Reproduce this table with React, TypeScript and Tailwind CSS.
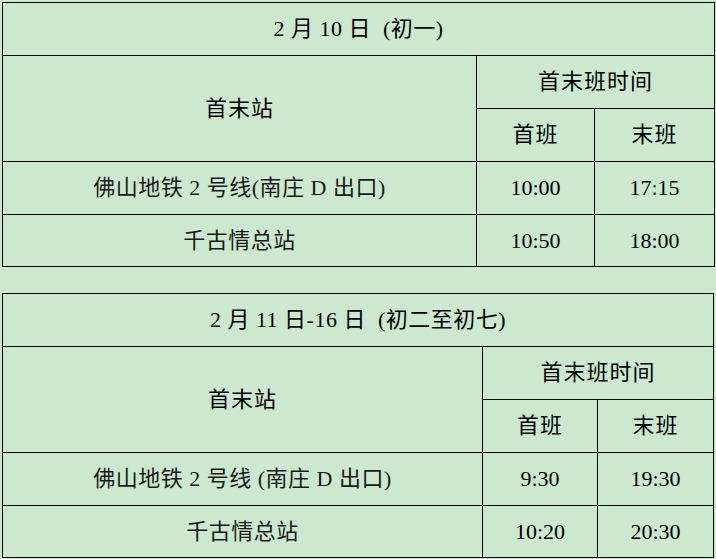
const font = "font-['Liberation_Serif','Noto_Sans_CJK_SC',serif]";

interface ScheduleRow {
  station: string;
  first: string;
  last: string;
}

interface ScheduleTableProps {
  title: string;
  rows: ScheduleRow[];
  colWidths: [string, string, string];
  tableWidth: string;
}

function ScheduleTable({ title, rows, colWidths, tableWidth }: ScheduleTableProps) {
  const cell = "border border-black text-center align-middle p-0";
  return (
    <table className={`${tableWidth} border-collapse border border-black table-fixed`}>
      <colgroup>
        <col className={colWidths[0]} />
        <col className={colWidths[1]} />
        <col className={colWidths[2]} />
      </colgroup>
      <tbody>
        <tr className="h-[53px]">
          <td colSpan={3} className={`${cell} whitespace-pre`}>
            {title}
          </td>
        </tr>
        <tr className="h-[53px]">
          <td rowSpan={2} className={`${cell} tracking-[1px]`}>
            首末站
          </td>
          <td colSpan={2} className={`${cell} tracking-[1px]`}>
            首末班时间
          </td>
        </tr>
        <tr className="h-[53px]">
          <td className={`${cell} tracking-[1px]`}>首班</td>
          <td className={`${cell} tracking-[1px]`}>末班</td>
        </tr>
        {rows.map((r, i) => (
          <tr key={r.station} className={i === rows.length - 1 ? "h-[52px]" : "h-[53px]"}>
            <td className={`${cell} text-[#1a1a1a]`}>{r.station}</td>
            <td className={`${cell} tracking-normal`}>{r.first}</td>
            <td className={`${cell} tracking-normal`}>{r.last}</td>
          </tr>
        ))}
      </tbody>
    </table>
  );
}

export default function App() {
  return (
    <div className={`min-h-screen w-[716px] bg-[#cce8cf] pl-[2px] pt-[2px] text-[22px] leading-none text-black tracking-[0.5px] ${font}`}>
      <ScheduleTable
        title="2 月 10 日  (初一)"
        tableWidth="w-[712px]"
        colWidths={["w-[474px]", "w-[118px]", "w-[120px]"]}
        rows={[
          { station: "佛山地铁 2 号线(南庄 D 出口)", first: "10:00", last: "17:15" },
          { station: "千古情总站", first: "10:50", last: "18:00" },
        ]}
      />
      <div className="h-[26px]" />
      <ScheduleTable
        title="2 月 11 日-16 日  (初二至初七)"
        tableWidth="w-[711px]"
        colWidths={["w-[480px]", "w-[115px]", "w-[116px]"]}
        rows={[
          { station: "佛山地铁 2 号线 (南庄 D 出口)", first: "9:30", last: "19:30" },
          { station: "千古情总站", first: "10:20", last: "20:30" },
        ]}
      />
    </div>
  );
}
